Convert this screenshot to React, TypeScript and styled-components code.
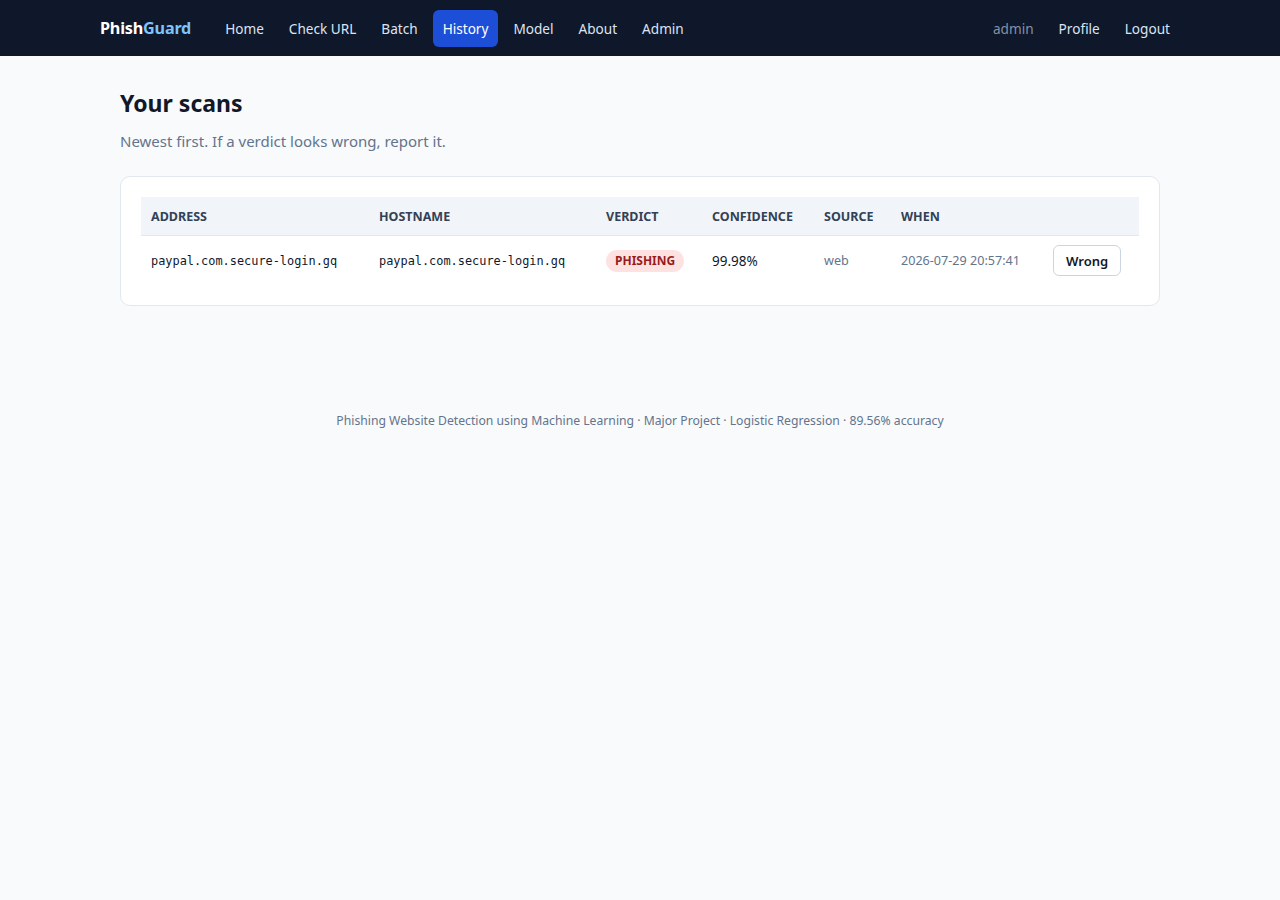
import { createGlobalStyle } from "styled-components";
import styled from "styled-components";

const Global = createGlobalStyle`
  html, body {
    margin: 0;
    padding: 0;
    background: #f8fafc;
    font-family: "Noto Sans", "Open Sans", sans-serif;
    color: #0f172a;
  }
  #root {
    min-height: 900px;
    background: #f8fafc;
  }
`;

const Navbar = styled.header`
  background: #0f172a;
  height: 56px;
`;

const NavInner = styled.div`
  max-width: 1080px;
  height: 100%;
  margin: 0 auto;
  display: flex;
  align-items: center;
`;

const Brand = styled.div`
  font-size: 16.2px;
  font-weight: 700;
  color: #ffffff;
  margin-right: 24px;
  letter-spacing: -0.2px;

  span {
    color: #7cc4fa;
  }
`;

const Links = styled.nav`
  display: flex;
  align-items: center;
  gap: 5px;
`;

const NavLink = styled.a<{ $active?: boolean; $muted?: boolean }>`
  font-size: 13.6px;
  padding: 8px 10px;
  border-radius: 6px;
  text-decoration: none;
  color: ${(p) => (p.$muted ? "#8491a8" : p.$active ? "#ffffff" : "#dbe4f3")};
  background: ${(p) => (p.$active ? "#1d4ed8" : "transparent")};
  line-height: 21px;
`;

const Spacer = styled.div`
  flex: 1;
`;

const Main = styled.main`
  max-width: 1040px;
  margin: 0 auto;
  padding: 32px 20px 0;
`;

const Title = styled.h1`
  font-size: 23px;
  font-weight: 700;
  margin: 0;
  line-height: 30px;
  color: #111827;
`;

const Subtitle = styled.p`
  font-size: 15px;
  color: #64748b;
  margin: 12px 0 24px;
  line-height: 22px;
`;

const Card = styled.section`
  background: #ffffff;
  border: 1px solid #e2e8f0;
  border-radius: 10px;
  padding: 20px;
`;

const Table = styled.table`
  width: 100%;
  border-collapse: collapse;
  table-layout: fixed;
`;

const Col = styled.col<{ $w: number }>`
  width: ${(p) => p.$w}px;
`;

const Th = styled.th`
  background: #f1f5f9;
  text-align: left;
  font-size: 12.5px;
  font-weight: 700;
  text-transform: uppercase;
  color: #334155;
  padding: 0 10px;
  height: 38px;
  border-bottom: 1px solid #e2e8f0;
`;

const Td = styled.td`
  padding: 0 10px;
  height: 49px;
  font-size: 13.5px;
  color: #0f172a;
  vertical-align: middle;
`;

const Mono = styled(Td)`
  font-family: "DejaVu Sans Mono", "Liberation Mono", monospace;
  font-size: 11.9px;
`;

const Muted = styled(Td)`
  color: #64748b;
  font-size: 12.6px;
`;

const Badge = styled.span`
  display: inline-block;
  background: #fee2e2;
  color: #991b1b;
  font-size: 12px;
  font-weight: 700;
  padding: 2px 9px;
  border-radius: 999px;
  line-height: 18px;
`;

const Button = styled.button`
  font-family: inherit;
  background: #ffffff;
  border: 1px solid #cbd5e1;
  border-radius: 6px;
  font-size: 13px;
  font-weight: 600;
  color: #0f172a;
  padding: 0 12px;
  height: 31px;
  cursor: pointer;
`;

const Footer = styled.footer`
  text-align: center;
  font-size: 12.2px;
  color: #64748b;
  margin-top: 106px;
`;

const links = ["Home", "Check URL", "Batch", "History", "Model", "About", "Admin"];

export default function App() {
  return (
    <>
      <Global />
      <Navbar>
        <NavInner>
          <Brand>
            Phish<span>Guard</span>
          </Brand>
          <Links>
            {links.map((l) => (
              <NavLink key={l} $active={l === "History"}>
                {l}
              </NavLink>
            ))}
          </Links>
          <Spacer />
          <Links>
            <NavLink $muted>admin</NavLink>
            <NavLink>Profile</NavLink>
            <NavLink>Logout</NavLink>
          </Links>
        </NavInner>
      </Navbar>
      <Main>
        <Title>Your scans</Title>
        <Subtitle>Newest first. If a verdict looks wrong, report it.</Subtitle>
        <Card>
          <Table>
            <colgroup>
              <Col $w={228} />
              <Col $w={227} />
              <Col $w={106} />
              <Col $w={112} />
              <Col $w={77} />
              <Col $w={152} />
              <Col $w={96} />
            </colgroup>
            <thead>
              <tr>
                <Th>Address</Th>
                <Th>Hostname</Th>
                <Th>Verdict</Th>
                <Th>Confidence</Th>
                <Th>Source</Th>
                <Th>When</Th>
                <Th />
              </tr>
            </thead>
            <tbody>
              <tr>
                <Mono>paypal.com.secure-login.gq</Mono>
                <Mono>paypal.com.secure-login.gq</Mono>
                <Td>
                  <Badge>PHISHING</Badge>
                </Td>
                <Td>99.98%</Td>
                <Muted>web</Muted>
                <Muted>2026-07-29 20:57:41</Muted>
                <Td>
                  <Button>Wrong</Button>
                </Td>
              </tr>
            </tbody>
          </Table>
        </Card>
        <Footer>
          Phishing Website Detection using Machine Learning · Major Project · Logistic Regression · 89.56% accuracy
        </Footer>
      </Main>
    </>
  );
}
